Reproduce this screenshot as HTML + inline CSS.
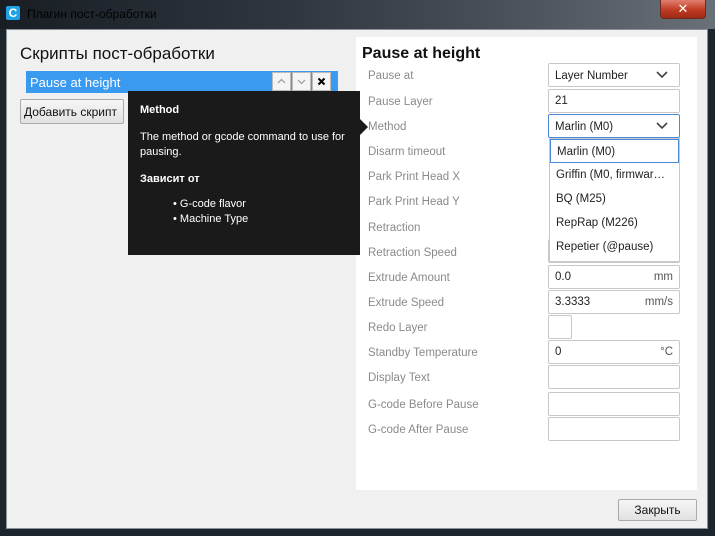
<!DOCTYPE html><html><head><meta charset="utf-8"><style>
*{box-sizing:border-box;margin:0;padding:0}
body{width:715px;height:536px;overflow:hidden;background:#1c242c;font-family:"Liberation Sans","DejaVu Sans",sans-serif;position:relative}
.abs{position:absolute}
.title{left:0;top:0;width:715px;height:29px;background:linear-gradient(90deg,#181e24 0%,#30363e 40%,#4a5058 70%,#6a7078 100%)}
.client{left:6px;top:29px;width:702px;height:500px;background:#f0f0f0;border:1px solid #8a9098}
.lbl{left:368px;font-size:11.5px;color:#8a8a8a}
.inp{left:548px;width:132px;height:24px;background:#fff;border:1px solid #c8c8c8;border-radius:2px;font-size:11.5px;color:#222;padding:5px 6px}
.unit{position:absolute;right:6px;top:5px;color:#555}
.chev{position:absolute;right:10px;top:5px;width:14px;height:12px}
.tip{left:128px;top:91px;width:232px;height:164px;background:#1a1a1a;color:#fff;font-size:11px;padding:13px 12px}
.dd{left:549px;top:138px;width:131px;height:124px;background:#fff;border:1px solid #c8c8c8;font-size:11.5px;color:#222}
.dd div{height:24px;padding:6px 6px 4px}
.sb{width:19px;height:19px;background:#f4f4f4;border:1px solid #bbb}
</style></head><body>
<div class="abs title"></div>
<div class="abs" style="left:6px;top:6px;width:14px;height:14px;background:#1fa3e6;border-radius:2px;color:#fff;font-weight:bold;font-size:12px;line-height:14px;text-align:center">C</div>
<div class="abs" style="left:27px;top:7px;font-size:12px;color:#000">Плагин пост-обработки</div>
<div class="abs" style="left:660px;top:0;width:46px;height:19px;background:linear-gradient(#e08070,#c03a22 55%,#a02a18);border:1px solid #6a2a20;border-top:none;border-radius:0 0 4px 4px;color:#fff;font-weight:bold;font-size:13px;text-align:center;line-height:18px">✕</div>
<div class="abs client"></div>
<div class="abs" style="left:356px;top:37px;width:341px;height:453px;background:#fff"></div>
<div class="abs" style="left:20px;top:44px;font-size:17px;color:#111">Скрипты пост-обработки</div>
<div class="abs" style="left:26px;top:71px;width:312px;height:22px;background:#3a9af0"></div>
<div class="abs" style="left:30px;top:75px;font-size:13px;color:#fff">Pause at height</div>
<div class="abs sb" style="left:272px;top:72px"><svg width="17" height="17" viewBox="0 0 17 17"><path d="M5 10l3.5-3.5L12 10" fill="none" stroke="#999" stroke-width="1.2"/></svg></div>
<div class="abs sb" style="left:292px;top:72px"><svg width="17" height="17" viewBox="0 0 17 17"><path d="M5 7l3.5 3.5L12 7" fill="none" stroke="#999" stroke-width="1.2"/></svg></div>
<div class="abs sb" style="left:312px;top:72px"><svg width="17" height="17" viewBox="0 0 17 17"><path d="M5.5 5.5l6 6M11.5 5.5l-6 6" fill="none" stroke="#000" stroke-width="2"/></svg></div>
<div class="abs" style="left:20px;top:99px;width:104px;height:25px;background:linear-gradient(#f6f6f6,#e2e2e2);border:1px solid #aaa;border-radius:2px;font-size:12px;padding:5px 3px;color:#111">Добавить скрипт</div>
<div class="abs" style="left:362px;top:45px;font-size:16px;font-weight:bold;color:#111">Pause at height</div>
<div class="abs lbl" style="top:70px">Pause at</div>
<div class="abs lbl" style="top:96px">Pause Layer</div>
<div class="abs lbl" style="top:121px">Method</div>
<div class="abs lbl" style="top:146px">Disarm timeout</div>
<div class="abs lbl" style="top:171px">Park Print Head X</div>
<div class="abs lbl" style="top:196px">Park Print Head Y</div>
<div class="abs lbl" style="top:222px">Retraction</div>
<div class="abs lbl" style="top:247px">Retraction Speed</div>
<div class="abs lbl" style="top:272px">Extrude Amount</div>
<div class="abs lbl" style="top:297px">Extrude Speed</div>
<div class="abs lbl" style="top:322px">Redo Layer</div>
<div class="abs lbl" style="top:347px">Standby Temperature</div>
<div class="abs lbl" style="top:372px">Display Text</div>
<div class="abs lbl" style="top:399px">G-code Before Pause</div>
<div class="abs lbl" style="top:424px">G-code After Pause</div>
<div class="abs inp" style="top:63px;padding-top:6px">Layer Number<svg class="chev" viewBox="0 0 14 12"><path d="M2 3l5 5 5-5" fill="none" stroke="#444" stroke-width="1.6"/></svg></div>
<div class="abs inp" style="top:89px">21</div>
<div class="abs inp" style="top:114px;border-color:#4a8ad8;padding-top:6px">Marlin (M0)<svg class="chev" viewBox="0 0 14 12"><path d="M2 3l5 5 5-5" fill="none" stroke="#444" stroke-width="1.6"/></svg></div>
<div class="abs inp" style="top:239px"></div>
<div class="abs inp" style="top:265px">0.0<span class="unit">mm</span></div>
<div class="abs inp" style="top:290px">3.3333<span class="unit">mm/s</span></div>
<div class="abs inp" style="top:315px;width:24px"></div>
<div class="abs inp" style="top:340px">0<span class="unit">°C</span></div>
<div class="abs inp" style="top:365px"></div>
<div class="abs inp" style="top:392px"></div>
<div class="abs inp" style="top:417px"></div>
<div class="abs dd">
<div style="border:1px solid #4a8ad8">Marlin (M0)</div>
<div>Griffin (M0, firmwar…</div>
<div>BQ (M25)</div>
<div>RepRap (M226)</div>
<div>Repetier (@pause)</div>
</div>
<div class="abs tip">
<div style="font-weight:bold">Method</div>
<div style="margin-top:14px;line-height:15px">The method or gcode command to use for pausing.</div>
<div style="margin-top:13px;font-weight:bold">Зависит от</div>
<div style="margin-top:12px;margin-left:33px;line-height:15px">• G-code flavor<br>• Machine Type</div>
</div>
<div class="abs" style="left:360px;top:119px;width:0;height:0;border-top:8px solid transparent;border-bottom:8px solid transparent;border-left:8px solid #1a1a1a"></div>
<div class="abs" style="left:618px;top:499px;width:79px;height:22px;background:linear-gradient(#f6f6f6,#e2e2e2);border:1px solid #aaa;border-radius:2px;font-size:12px;text-align:center;line-height:20px;color:#111">Закрыть</div>
</body></html>
